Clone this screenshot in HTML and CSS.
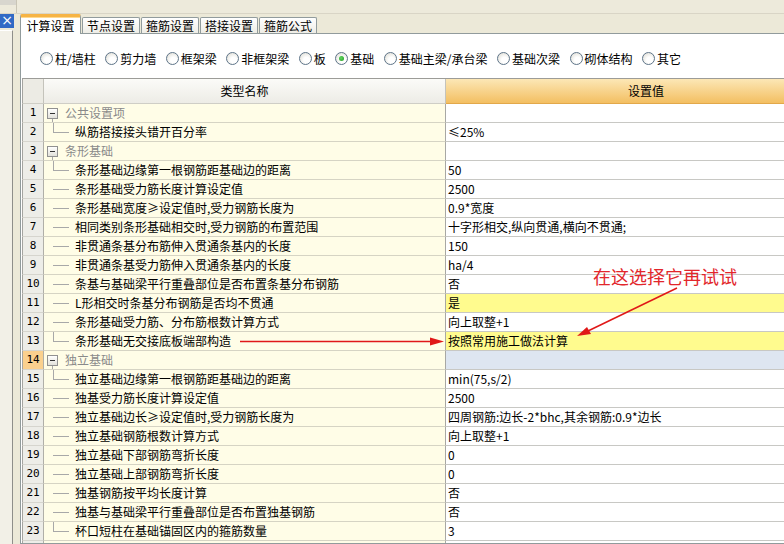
FILE: index.html
```html
<!DOCTYPE html>
<html lang="zh">
<head>
<meta charset="utf-8">
<link rel="stylesheet" href="styles.css">
</head>
<body>
<div class="topbar"><span class="grip"></span></div>
<div class="main">
  <div class="side">
    <div class="close">×</div>
    <div class="sidepanel"></div>
  </div>
  <div class="content">
    <div class="tabs">
      <div class="tab active">计算设置</div>
      <div class="tab">节点设置</div>
      <div class="tab">箍筋设置</div>
      <div class="tab">搭接设置</div>
      <div class="tab">箍筋公式</div>
    </div>
    <div class="panel">
      <div class="radios">
        <label class="opt"><span class="radio"></span>柱/墙柱</label>
        <label class="opt"><span class="radio"></span>剪力墙</label>
        <label class="opt"><span class="radio"></span>框架梁</label>
        <label class="opt"><span class="radio"></span>非框架梁</label>
        <label class="opt"><span class="radio"></span>板</label>
        <label class="opt"><span class="radio on"></span>基础</label>
        <label class="opt"><span class="radio"></span>基础主梁/承台梁</label>
        <label class="opt"><span class="radio"></span>基础次梁</label>
        <label class="opt"><span class="radio"></span>砌体结构</label>
        <label class="opt"><span class="radio"></span>其它</label>
      </div>
      <div class="grid">
        <div class="h-num"></div><div class="h-name">类型名称</div><div class="h-val">设置值</div>

        <div class="num">1</div><div class="name group"><span class="box"></span>公共设置项</div><div class="val"></div>
        <div class="num">2</div><div class="name child"><span class="branch el"></span><span class="txt">纵筋搭接接头错开百分率</span></div><div class="val">≤25%</div>
        <div class="num">3</div><div class="name group"><span class="box"></span>条形基础</div><div class="val"></div>
        <div class="num">4</div><div class="name child"><span class="branch el"></span><span class="txt">条形基础边缘第一根钢筋距基础边的距离</span></div><div class="val">50</div>
        <div class="num">5</div><div class="name child"><span class="branch"></span><span class="txt">条形基础受力筋长度计算设定值</span></div><div class="val">2500</div>
        <div class="num">6</div><div class="name child"><span class="branch"></span><span class="txt">条形基础宽度≥设定值时,受力钢筋长度为</span></div><div class="val">0.9*宽度</div>
        <div class="num">7</div><div class="name child"><span class="branch"></span><span class="txt">相同类别条形基础相交时,受力钢筋的布置范围</span></div><div class="val">十字形相交,纵向贯通,横向不贯通;</div>
        <div class="num">8</div><div class="name child"><span class="branch"></span><span class="txt">非贯通条基分布筋伸入贯通条基内的长度</span></div><div class="val">150</div>
        <div class="num">9</div><div class="name child"><span class="branch"></span><span class="txt">非贯通条基受力筋伸入贯通条基内的长度</span></div><div class="val">ha/4</div>
        <div class="num">10</div><div class="name child"><span class="branch"></span><span class="txt">条基与基础梁平行重叠部位是否布置条基分布钢筋</span></div><div class="val">否</div>
        <div class="num">11</div><div class="name child"><span class="branch"></span><span class="txt">L形相交时条基分布钢筋是否均不贯通</span></div><div class="val hi">是</div>
        <div class="num">12</div><div class="name child"><span class="branch"></span><span class="txt">条形基础受力筋、分布筋根数计算方式</span></div><div class="val">向上取整+1</div>
        <div class="num">13</div><div class="name child"><span class="branch el"></span><span class="txt">条形基础无交接底板端部构造</span></div><div class="val hi">按照常用施工做法计算</div>
        <div class="num sel">14</div><div class="name group"><span class="box"></span>独立基础</div><div class="val cur"></div>
        <div class="num">15</div><div class="name child"><span class="branch el"></span><span class="txt">独立基础边缘第一根钢筋距基础边的距离</span></div><div class="val">min(75,s/2)</div>
        <div class="num">16</div><div class="name child"><span class="branch"></span><span class="txt">独基受力筋长度计算设定值</span></div><div class="val">2500</div>
        <div class="num">17</div><div class="name child"><span class="branch"></span><span class="txt">独立基础边长≥设定值时,受力钢筋长度为</span></div><div class="val">四周钢筋:边长-2*bhc,其余钢筋:0.9*边长</div>
        <div class="num">18</div><div class="name child"><span class="branch"></span><span class="txt">独立基础钢筋根数计算方式</span></div><div class="val">向上取整+1</div>
        <div class="num">19</div><div class="name child"><span class="branch"></span><span class="txt">独立基础下部钢筋弯折长度</span></div><div class="val">0</div>
        <div class="num">20</div><div class="name child"><span class="branch"></span><span class="txt">独立基础上部钢筋弯折长度</span></div><div class="val">0</div>
        <div class="num">21</div><div class="name child"><span class="branch"></span><span class="txt">独基钢筋按平均长度计算</span></div><div class="val">否</div>
        <div class="num">22</div><div class="name child"><span class="branch"></span><span class="txt">独基与基础梁平行重叠部位是否布置独基钢筋</span></div><div class="val">否</div>
        <div class="num">23</div><div class="name child"><span class="branch el"></span><span class="txt">杯口短柱在基础锚固区内的箍筋数量</span></div><div class="val">3</div>
        <div class="num"></div><div class="name"></div><div class="val"></div>
      </div>
    </div>
  </div>
</div>
<div class="note">在这选择它再试试</div>
<svg class="arrows" width="784" height="544" viewBox="0 0 784 544">
  <line x1="240" y1="341.5" x2="432" y2="341.5" stroke="#E01818" stroke-width="1.5"/>
  <polygon points="444,341.5 430,337.5 430,345.5" fill="#E01818"/>
  <line x1="677" y1="288" x2="588" y2="331" stroke="#E01818" stroke-width="1.5"/>
  <polygon points="577,336 587,327 591,334" fill="#E01818"/>
</svg>
</body>
</html>
```
FILE: styles.css
```css
* { box-sizing: border-box; }
html, body { margin: 0; padding: 0; }
body {
  width: 784px;
  height: 544px;
  overflow: hidden;
  position: relative;
  background: #ECE9D8;
  font-family: "Noto Sans CJK SC", "Noto Sans", sans-serif;
  font-size: 12px;
  color: #000;
}
.topbar {
  height: 14px;
  background: #EDEADB;
  border-bottom: 1px solid #D9D5C6;
  display: flex;
}
.grip {
  width: 17px;
  height: 13px;
  border-right: 1px solid #C9C5B5;
  background: linear-gradient(#D8D6CE 0 5px, transparent 5px);
}
.main {
  display: flex;
  height: 530px;
}
.side {
  width: 20px;
  display: flex;
  flex-direction: column;
}
.close {
  width: 14px;
  height: 14px;
  background: #316AC5;
  color: #fff;
  font-family: "DejaVu Sans", sans-serif;
  font-size: 14px;
  line-height: 13px;
  text-align: center;
}
.sidepanel {
  width: 13px;
  flex: 1;
  margin-top: 2px;
  background: #F2F0E7;
  border-top: 1px solid #FFFFFF;
  border-right: 1px solid #8E8E8A;
}
.content {
  flex: 1;
  min-width: 0;
  display: flex;
  flex-direction: column;
}
.tabs {
  height: 19px;
  display: flex;
  align-items: flex-end;
  position: relative;
  z-index: 1;
}
.tab {
  width: 58px;
  height: 16px;
  margin-left: 1px;
  border: 1px solid #919B9C;
  border-bottom: none;
  border-radius: 2px 2px 0 0;
  background: linear-gradient(#FFFFFF, #EEEDE6);
  text-align: center;
  line-height: 15px;
}
.tab.active {
  width: 61px;
  height: 20px;
  margin-left: 0;
  margin-bottom: -1px;
  background: #FFFFFF;
  border-top: 3px solid #F6B445;
  box-shadow: inset 0 1px 0 #FFD98E;
  line-height: 17px;
}
.panel {
  flex: 1;
  background: #FFFFFF;
  border: 1px solid #919B9C;
  border-right: none;
  padding-left: 1px;
  overflow: hidden;
}
.radios {
  height: 44px;
  padding: 5px 0 0 18px;
  display: flex;
  align-items: center;
  gap: 9.5px;
  white-space: nowrap;
}
.opt {
  display: flex;
  align-items: center;
  gap: 2px;
}
.radio {
  width: 13px;
  height: 13px;
  border-radius: 50%;
  border: 1px solid #5E7489;
  background: radial-gradient(circle at 60% 65%, #FFFFFF 0 30%, #E4E3DC 80%);
  display: flex;
  align-items: center;
  justify-content: center;
}
.radio.on::after {
  content: "";
  width: 5px;
  height: 5px;
  border-radius: 50%;
  background: radial-gradient(circle at 40% 40%, #63D763, #1C9A1C);
}
.grid {
  display: grid;
  grid-template-columns: 22px 402px 400px;
  grid-template-rows: 25px;
  grid-auto-rows: 19px;
  border-top: 1px solid #9C9C98;
}
.grid > div {
  border-bottom: 1px solid #C8C8C4;
  white-space: nowrap;
  overflow: hidden;
  line-height: 18px;
}
.grid > .h-num, .grid > .h-name, .grid > .h-val {
  line-height: 24px;
}
.grid > .h-num {
  background: #ECEBE4;
  border-left: 1px solid #A4A4A0;
  border-right: 1px solid #C4C3BB;
  border-bottom: 1px solid #CFCEC6;
}
.grid > .h-name {
  background: linear-gradient(#FBFBF8, #EDECE6);
  border-right: 1px solid #C4C3BB;
  border-bottom: 1px solid #CFCEC6;
  text-align: center;
}
.grid > .h-val {
  background: linear-gradient(#FCE7B6, #F3BF62);
  border-bottom: 1px solid #E2A84A;
  text-align: center;
}
.grid > .num {
  background: #EDEDE8;
  border-left: 1px solid #A4A4A0;
  border-right: 1px solid #B0AFA8;
  border-bottom: 1px solid #D6D5CE;
  text-align: center;
  font-family: "DejaVu Sans Mono", monospace;
  font-size: 11px;
}
.grid > .num.sel { background: #FAD08E; }
.grid > .name {
  background: #FFFDE7;
  border-right: 1px solid #A8A8A4;
  border-bottom: 1px solid #D6D4C4;
  display: flex;
  align-items: center;
}
.grid > .val {
  background: #FFFFFF;
  padding-left: 2px;
}
.grid > .val.hi { background: #FFFB8E; }
.grid > .val.cur { background: #DEE6F1; }
.group { color: #8A8A8A; }
.box {
  position: relative;
  width: 11px;
  height: 11px;
  margin-left: 3px;
  margin-right: 7px;
  border: 1px solid #919191;
  background: linear-gradient(#FFFFFF, #E2E1DA);
  display: flex;
  align-items: center;
  justify-content: center;
}
.box::before {
  content: "";
  width: 5px;
  height: 1px;
  background: #333;
}
.box::after {
  content: "";
  position: absolute;
  left: 4px;
  top: 10px;
  width: 1px;
  height: 5px;
  background: #A8A8A8;
}
.branch {
  width: 16px;
  height: 1px;
  margin-left: 9px;
  background: #A8A8A8;
  flex: none;
}
.branch.el {
  align-self: flex-start;
  height: 10px;
  background: none;
  border-left: 1px solid #A8A8A8;
  border-bottom: 1px solid #A8A8A8;
}
.txt { margin-left: 6px; }
.note {
  position: absolute;
  left: 593px;
  top: 266px;
  font-size: 18px;
  line-height: 20px;
  color: #E2262B;
}
.arrows {
  position: absolute;
  left: 0;
  top: 0;
  pointer-events: none;
}
```
